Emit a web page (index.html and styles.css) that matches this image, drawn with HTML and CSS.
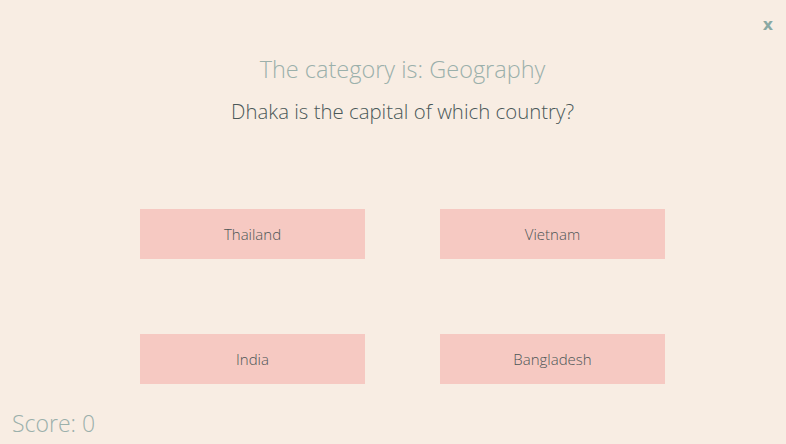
FILE: index.html
```html
<!DOCTYPE html>
<html>
<head>
<meta charset="utf-8">
<link rel="stylesheet" href="styles.css">
</head>
<body>
<div class="page">
  <div class="close">x</div>
  <main class="quiz">
    <h1 class="category">The category is: Geography</h1>
    <h2 class="question">Dhaka is the capital of which country?</h2>
    <div class="answers">
      <button class="answer">Thailand</button>
      <button class="answer">Vietnam</button>
      <button class="answer">India</button>
      <button class="answer">Bangladesh</button>
    </div>
  </main>
  <div class="score">Score: 0</div>
</div>
</body>
</html>
```

FILE: styles.css
```css
html, body {
  margin: 0;
  padding: 0;
  background: #f8ede3;
}
body {
  font-family: "Open Sans", "Noto Sans", sans-serif;
  font-weight: 300;
}
.page {
  position: relative;
  width: 786px;
  height: 444px;
  overflow: hidden;
}
.close {
  position: absolute;
  top: 15px;
  right: 13px;
  font-family: "DejaVu Sans", sans-serif;
  font-weight: 700;
  font-size: 16px;
  color: #8aa9a3;
}
.quiz {
  display: flex;
  flex-direction: column;
  align-items: center;
  padding-left: 19px;
  padding-top: 54px;
}
.category {
  margin: 0;
  font-size: 23.5px;
  font-weight: 300;
  line-height: 30px;
  color: #9bb0ab;
}
.question {
  margin: 14px 0 0 0;
  font-size: 20.4px;
  font-weight: 300;
  line-height: 26px;
  color: #4a5858;
}
.answers {
  display: grid;
  grid-template-columns: 225px 225px;
  column-gap: 75px;
  row-gap: 75px;
  margin-top: 85px;
}
.answer {
  height: 50px;
  border: none;
  background: #f6c9c2;
  font-family: "Open Sans", "Noto Sans", sans-serif;
  font-weight: 300;
  font-size: 15px;
  color: #4d5656;
  padding: 0;
}
.score {
  position: absolute;
  left: 12px;
  top: 408px;
  font-size: 23px;
  line-height: 31px;
  font-weight: 300;
  color: #9bb0ab;
}
```
